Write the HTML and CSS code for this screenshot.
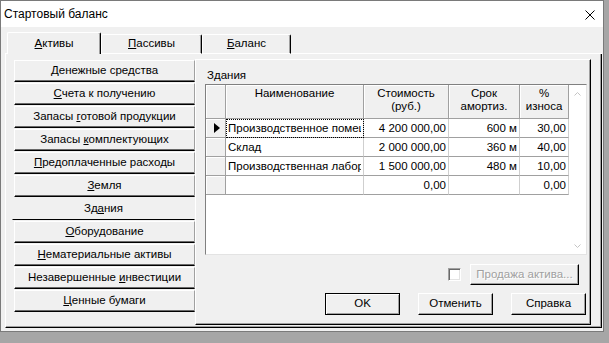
FILE: index.html
```html
<!DOCTYPE html>
<html lang="ru">

<head>
    <meta charset="UTF-8">
    <title>Стартовый баланс</title>
    <link rel="stylesheet" href="styles.css">
</head>

<body>
    <div class="window">
        <div class="titlebar">
            <span class="title">Стартовый баланс</span>
            <svg class="close" width="10" height="10" viewBox="0 0 10 10">
                <path d="M0.5 0.5 L9.5 9.5 M9.5 0.5 L0.5 9.5" stroke="#000" stroke-width="1" fill="none"/>
            </svg>
        </div>

        <div class="tabs">
            <div class="tab-gap"></div>
            <div class="tab active"><u>А</u>ктивы</div>
            <div class="tab tab-wide"><u>П</u>ассивы</div>
            <div class="tab tab-last"><u>Б</u>аланс</div>
            <div class="tab-fill"></div>
        </div>

        <div class="page">
            <div class="side">
                <div class="side-btn"><u>Д</u>енежные средства</div>
                <div class="side-btn"><u>С</u>чета к получению</div>
                <div class="side-btn">Запасы <u>г</u>отовой продукции</div>
                <div class="side-btn">Запасы <u>к</u>омплектующих</div>
                <div class="side-btn"><u>П</u>редоплаченные расходы</div>
                <div class="side-btn"><u>З</u>емля</div>
                <div class="side-btn selected">Зд<u>а</u>ния</div>
                <div class="side-btn"><u>О</u>борудование</div>
                <div class="side-btn"><u>Н</u>ематериальные активы</div>
                <div class="side-btn">Незавершенные <u>и</u>нвестиции</div>
                <div class="side-btn"><u>Ц</u>енные бумаги</div>
            </div>

            <div class="panel">
                <div class="panel-label">Здания</div>

                <div class="grid">
                    <div class="grid-table">
                        <div class="hd"></div>
                        <div class="hd">Наименование</div>
                        <div class="hd">Стоимость<br>(руб.)</div>
                        <div class="hd">Срок<br>амортиз.</div>
                        <div class="hd">%<br>износа</div>

                        <div class="ind"><span class="arrow"></span></div>
                        <div class="cell focus"><span class="clip">Производственное помещение</span></div>
                        <div class="cell num">4 200 000,00</div>
                        <div class="cell num">600 м</div>
                        <div class="cell num">30,00</div>

                        <div class="ind"></div>
                        <div class="cell">Склад</div>
                        <div class="cell num">2 000 000,00</div>
                        <div class="cell num">360 м</div>
                        <div class="cell num">40,00</div>

                        <div class="ind"></div>
                        <div class="cell"><span class="clip">Производственная лаборатория</span></div>
                        <div class="cell num">1 500 000,00</div>
                        <div class="cell num">480 м</div>
                        <div class="cell num">10,00</div>

                        <div class="ind"></div>
                        <div class="cell"></div>
                        <div class="cell num">0,00</div>
                        <div class="cell num"></div>
                        <div class="cell num">0,00</div>
                    </div>
                    <div class="scrollbar">
                        <svg width="7" height="4" viewBox="0 0 7 4">
                            <path d="M0.5 3.5 L3.5 0.5 L6.5 3.5" stroke="#c4c4c4" fill="none"/>
                        </svg>
                        <svg width="7" height="4" viewBox="0 0 7 4">
                            <path d="M0.5 0.5 L3.5 3.5 L6.5 0.5" stroke="#c4c4c4" fill="none"/>
                        </svg>
                    </div>
                </div>

                <div class="row-sale">
                    <span class="checkbox"></span>
                    <div class="btn btn-sale">Продажа актива...</div>
                </div>

                <div class="row-buttons">
                    <div class="btn btn-default">OK</div>
                    <div class="btn">Отменить</div>
                    <div class="btn">Справка</div>
                </div>
            </div>
        </div>
    </div>
</body>

</html>
```

FILE: styles.css
```css
body {
    margin: 0;
    background: #a6a6a6;
    font-family: 'Liberation Sans', Arial, sans-serif;
    font-size: 11.5px;
    color: #000;
}

u {
    text-decoration: underline;
    text-underline-offset: 1px;
}

.window {
    width: 604px;
    height: 332px;
    box-sizing: border-box;
    border: 1px solid #7a7a7a;
    background: #f0f0f0;
    padding: 0 1px 0 4px;
}

.titlebar {
    height: 26px;
    margin: 0 -1px 0 -4px;
    padding-left: 3px;
    background: #fff;
    display: flex;
    align-items: center;
    justify-content: space-between;
}

.title {
    font-size: 12px;
    line-height: 26px;
}

.close {
    margin-right: 8px;
    margin-top: 1px;
}

/* вкладки */
.tabs {
    margin-top: 5px;
    display: flex;
    align-items: flex-end;
    width: 597px;
}

.tab-gap {
    width: 2px;
    border-bottom: 1px solid #fff;
}

.tab {
    box-sizing: border-box;
    width: 94px;
    height: 20px;
    line-height: 17px;
    text-align: center;
    border-top: 1px solid #fff;
    border-left: 1px solid #fff;
    border-right: 1px solid #000;
    border-bottom: 1px solid #fff;
    box-shadow: inset -1px 0 #a0a0a0;
    border-radius: 2px 2px 0 0;
}

.tab.active {
    height: 22px;
    line-height: 19px;
    border-bottom: none;
    padding-top: 1px;
}

.tab-wide {
    width: 101px;
}

.tab-last {
    width: 89px;
}

.tab-fill {
    flex: 1;
    border-bottom: 1px solid #fff;
}

.page {
    box-sizing: border-box;
    width: 597px;
    height: 274px;
    border-left: 1px solid #fff;
    border-right: 1px solid #000;
    border-bottom: 1px solid #000;
    box-shadow: inset -1px -1px #a0a0a0;
    padding: 5px 0 0 6px;
    display: flex;
    align-items: flex-start;
}

/* левая колонка кнопок */
.side {
    width: 183px;
    margin-top: 1px;
    display: flex;
    flex-direction: column;
    gap: 1px;
}

.side-btn {
    box-sizing: border-box;
    width: 181px;
    height: 22px;
    margin-left: 2px;
    line-height: 19px;
    text-align: center;
    border-top: 1px solid #fff;
    border-left: 1px solid #fff;
    border-right: 1px solid #a0a0a0;
    border-bottom: 1px solid #000;
    box-shadow: inset 0 -1px #696969;
    white-space: nowrap;
}

.side-btn.selected {
    width: 183px;
    margin-left: 0;
    border-top-color: #f0f0f0;
    border-left-color: #f0f0f0;
    border-right-color: #f0f0f0;
    box-shadow: none;
}

/* правая панель */
.panel {
    box-sizing: border-box;
    width: 396px;
    height: 266px;
    border: 1px solid;
    border-color: #fff #000 #000 #fff;
    box-shadow: inset -1px -1px #a0a0a0;
    padding: 8px 3px 0 9px;
    display: flex;
    flex-direction: column;
}

.panel-label {
    line-height: 14px;
    margin-left: 2px;
}

.grid {
    margin-top: 2px;
    height: 171px;
    box-sizing: border-box;
    border: 1px solid;
    border-color: #808080 #e3e3e3 #e3e3e3 #808080;
    background: #fff;
    display: flex;
}

.grid-table {
    display: grid;
    grid-template-columns: 20px 138px 85px 71px 49px;
    grid-template-rows: 34px;
    grid-auto-rows: 19px;
    align-content: start;
    width: 363px;
}

.grid-table > div {
    box-sizing: border-box;
    overflow: hidden;
    white-space: nowrap;
}

.hd {
    background: #f0f0f0;
    border-right: 1px solid #a0a0a0;
    border-bottom: 1px solid #a0a0a0;
    box-shadow: inset 1px 1px #fff;
    text-align: center;
    line-height: 13px;
    padding-top: 2px;
}

.ind {
    background: #f0f0f0;
    border-right: 1px solid #a0a0a0;
    border-bottom: 1px solid #a0a0a0;
    box-shadow: inset 1px 1px #fff;
    display: flex;
    align-items: center;
    justify-content: center;
}

.arrow {
    width: 0;
    height: 0;
    border-left: 6px solid #000;
    border-top: 5px solid transparent;
    border-bottom: 5px solid transparent;
    margin-left: 2px;
}

.cell {
    border-right: 1px solid #cfcfcf;
    border-bottom: 1px solid #a0a0a0;
    line-height: 18px;
    padding: 0 2px;
}

.cell.num {
    text-align: right;
}

.cell.focus {
    outline: 1px dotted #000;
    outline-offset: -1px;
}

.clip {
    display: block;
    overflow: hidden;
}

.scrollbar {
    width: 17px;
    display: flex;
    flex-direction: column;
    align-items: center;
    justify-content: space-between;
    padding: 7px 0 6px;
    box-sizing: border-box;
}

/* кнопки внизу */
.row-sale {
    margin-top: 9px;
    display: flex;
    align-items: center;
    justify-content: flex-end;
    gap: 9px;
    padding-right: 8px;
}

.checkbox {
    width: 13px;
    height: 13px;
    box-sizing: border-box;
    border: 1px solid;
    border-color: #a0a0a0 #fff #fff #a0a0a0;
    box-shadow: inset 1px 1px #696969, inset -1px -1px #e3e3e3;
    background: #fff;
}

.btn {
    box-sizing: border-box;
    width: 75px;
    height: 22px;
    line-height: 19px;
    text-align: center;
    background: #f0f0f0;
    border: 1px solid;
    border-color: #fff #000 #000 #fff;
    box-shadow: inset -1px -1px #a0a0a0;
    white-space: nowrap;
}

.btn-sale {
    width: 109px;
    height: 21px;
    line-height: 18px;
    color: #a0a0a0;
    text-shadow: 1px 1px #fff;
}

.btn-default {
    border-color: #000;
    box-shadow: inset 1px 1px #fff, inset -1px -1px #a0a0a0;
}

.row-buttons {
    margin-top: 8px;
    display: flex;
    justify-content: flex-end;
    gap: 18px;
    padding-right: 1px;
}
```
